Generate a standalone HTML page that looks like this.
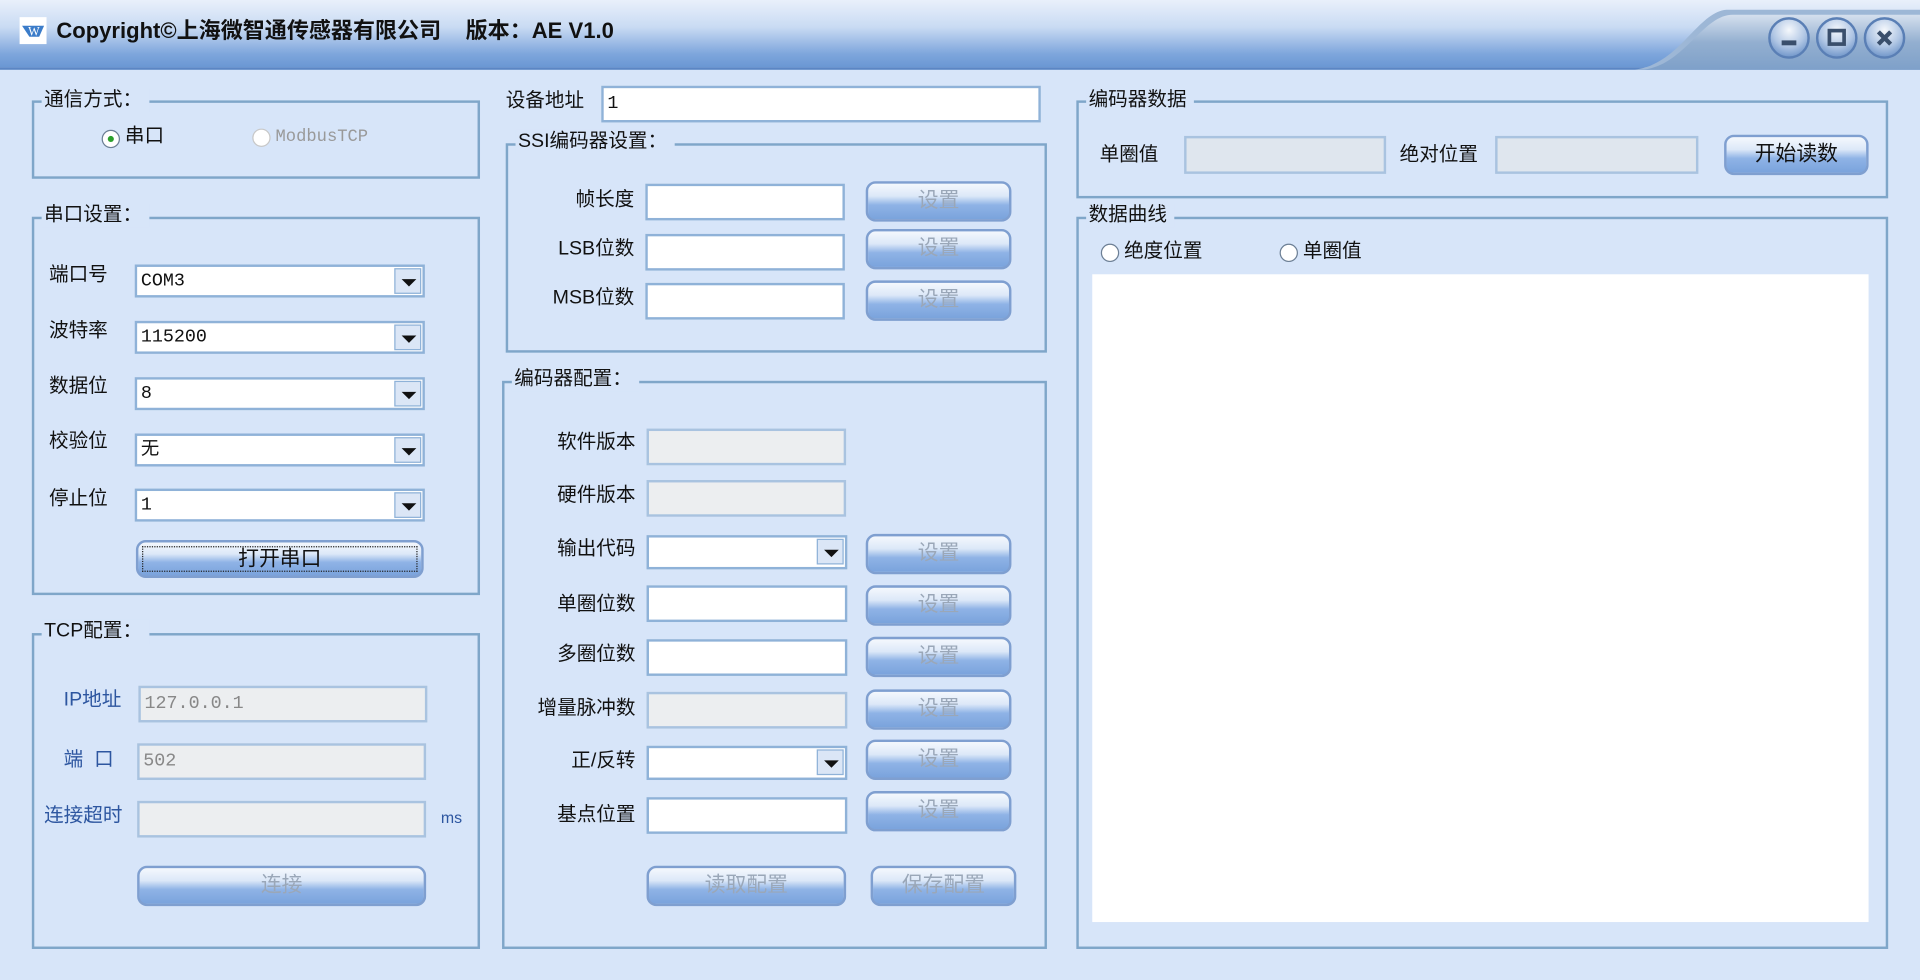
<!DOCTYPE html>
<html><head><meta charset="utf-8"><style>
*{box-sizing:border-box;margin:0;padding:0}
html,body{width:1920px;height:979px;overflow:hidden;background:#d7e5f9}
#w{position:absolute;left:0;top:0;width:1568px;height:800px;transform:scale(1.2245);transform-origin:0 0;background:#d7e5f9;font-family:"Liberation Sans","Noto Sans CJK SC",sans-serif;font-size:16px;color:#111}
.a{position:absolute}
.tb{left:0;top:0;width:1568px;height:57px;background:linear-gradient(#e9f0fb 0%,#c9dbf3 40%,#7ea6dc 80%,#6a97d3 100%);border-bottom:2px solid #5b86c4}
.gb{position:absolute;border:2px solid #7fa6c9}
.gt{position:absolute;background:#d7e5f9;padding:0 6px 0 2px;white-space:nowrap;line-height:20px}
.in{position:absolute;background:#fff;border:2px solid #8fb2d8;height:30px;font-size:15px;line-height:25px;padding-left:3px;font-family:"Liberation Mono","Noto Sans CJK SC",monospace}
.dis{background:#eceef0;color:#888;border-color:#a9c3e0}
.cb{position:absolute;background:#fff;border:2px solid #8fb2d8;height:27px;font-size:15px;line-height:23px;padding-left:3px;font-family:"Liberation Mono","Noto Sans CJK SC",monospace}
.cb i{position:absolute;right:1px;top:1px;width:22px;height:21px;border:1px solid #8fb2d8;background:#dbe6f6}
.cb i:after{content:"";position:absolute;left:5px;top:8px;border-left:6px solid transparent;border-right:6px solid transparent;border-top:6px solid #111}
.bt{position:absolute;height:33px;border:2px solid #7f9fd0;border-radius:8px;background:linear-gradient(#f4f8fd 0%,#dce8f8 35%,#8fb3e6 60%,#7aa3dc 100%);text-align:center;line-height:28px;font-size:17px;color:#9aa7b8}
.lb{position:absolute;white-space:nowrap;line-height:20px}
.r{position:absolute;width:15px;height:15px;border-radius:50%;border:1px solid #6c7f95;background:#fff}
</style></head><body><div id="w">
<div class="a tb"></div>
<svg class="a" style="left:1330px;top:0" width="238" height="57"><path d="M0 57 C40 57 55 10 80 8 L238 8 L238 57Z" fill="#9db7d6"/><path d="M10 57 C45 55 60 12 85 12 L238 12 L238 57Z" fill="url(#g1)"/><defs><linearGradient id="g1" x1="0" y1="0" x2="0" y2="1"><stop offset="0" stop-color="#d5e0ee"/><stop offset=".5" stop-color="#93afd0"/><stop offset="1" stop-color="#7ea0c9"/></linearGradient><radialGradient id="g2" cx=".5" cy=".3" r=".7"><stop offset="0" stop-color="#f5f8fc"/><stop offset=".6" stop-color="#b0c6e4"/><stop offset="1" stop-color="#6f95c9"/></radialGradient></defs>
<g stroke="#5a7fb5" stroke-width="2" fill="url(#g2)"><circle cx="131" cy="31" r="16"/><circle cx="170" cy="31" r="16"/><circle cx="209" cy="31" r="16"/></g>
<rect x="125" y="33" width="12" height="4" fill="#3a4f6c"/><rect x="164" y="25" width="12" height="11" fill="none" stroke="#3a4f6c" stroke-width="3"/><path d="M204 26 L214 36 M214 26 L204 36" stroke="#3a4f6c" stroke-width="3.5"/></svg>
<div class="a" style="left:16px;top:14px;width:22px;height:22px;background:#fff"><svg width="22" height="22"><path d="M2 7 H20 L16 16 H8Z" fill="#3b7cc9"/><text x="7" y="15" font-size="10" fill="#fff" font-family="Liberation Serif">W</text></svg></div>
<div class="lb" style="left:46px;top:15px;font-size:18px;font-weight:bold;color:#111">Copyright©上海微智通传感器有限公司&nbsp;&nbsp;&nbsp;&nbsp;版本：AE V1.0</div>

<!-- group 1 -->
<div class="gb" style="left:26px;top:82px;width:366px;height:64px"></div>
<div class="gt" style="left:34px;top:72px">通信方式：</div>
<div class="r" style="left:83px;top:106px"><div class="a" style="left:4px;top:4px;width:5px;height:5px;border-radius:50%;background:#2ca02c"></div></div>
<div class="lb" style="left:102px;top:102px">串口</div>
<div class="r" style="left:206px;top:105px;border-color:#c8c8c8"></div>
<div class="lb" style="left:225px;top:102px;color:#999;font-family:'Liberation Mono',monospace;font-size:14px">ModbusTCP</div>

<!-- group 2 -->
<div class="gb" style="left:26px;top:177px;width:366px;height:309px"></div>
<div class="gt" style="left:34px;top:166px">串口设置：</div>
<div class="lb" style="left:40px;top:215px">端口号</div><div class="cb" style="left:110px;top:216px;width:237px">COM3<i></i></div>
<div class="lb" style="left:40px;top:261px">波特率</div><div class="cb" style="left:110px;top:262px;width:237px">115200<i></i></div>
<div class="lb" style="left:40px;top:306px">数据位</div><div class="cb" style="left:110px;top:308px;width:237px">8<i></i></div>
<div class="lb" style="left:40px;top:351px">校验位</div><div class="cb" style="left:110px;top:354px;width:237px">无<i></i></div>
<div class="lb" style="left:40px;top:398px">停止位</div><div class="cb" style="left:110px;top:399px;width:237px">1<i></i></div>
<div class="bt" style="left:111px;top:441px;width:235px;height:31px;color:#111;line-height:25px"><div style="margin:3px;border:1px dotted #222;height:21px;line-height:19px">打开串口</div></div>

<!-- group 3 -->
<div class="gb" style="left:26px;top:517px;width:366px;height:258px"></div>
<div class="gt" style="left:34px;top:506px">TCP配置：</div>
<div class="lb" style="left:52px;top:562px;color:#2d56a0">IP地址</div><div class="in dis" style="left:113px;top:560px;width:236px">127.0.0.1</div>
<div class="lb" style="left:52px;top:611px;color:#2d56a0">端&nbsp;&nbsp;口</div><div class="in dis" style="left:112px;top:607px;width:236px">502</div>
<div class="lb" style="left:36px;top:657px;color:#2d56a0">连接超时</div><div class="in dis" style="left:112px;top:654px;width:236px"></div>
<div class="lb" style="left:360px;top:658px;font-size:13px;color:#2d56a0">ms</div>
<div class="bt" style="left:112px;top:707px;width:236px">连接</div>

<!-- device addr -->
<div class="lb" style="left:413px;top:73px">设备地址</div><div class="in" style="left:491px;top:70px;width:359px">1</div>

<!-- SSI -->
<div class="gb" style="left:413px;top:117px;width:442px;height:171px"></div>
<div class="gt" style="left:421px;top:106px">SSI编码器设置：</div>
<div class="lb" style="left:440px;top:154px;width:78px;text-align:right">帧长度</div><div class="in" style="left:527px;top:150px;width:163px"></div><div class="bt" style="left:707px;top:148px;width:119px">设置</div>
<div class="lb" style="left:440px;top:194px;width:78px;text-align:right">LSB位数</div><div class="in" style="left:527px;top:191px;width:163px"></div><div class="bt" style="left:707px;top:187px;width:119px">设置</div>
<div class="lb" style="left:440px;top:234px;width:78px;text-align:right">MSB位数</div><div class="in" style="left:527px;top:231px;width:163px"></div><div class="bt" style="left:707px;top:229px;width:119px">设置</div>

<!-- encoder config -->
<div class="gb" style="left:410px;top:311px;width:445px;height:464px"></div>
<div class="gt" style="left:418px;top:300px">编码器配置：</div>
<div class="lb" style="left:420px;top:352px;width:99px;text-align:right">软件版本</div><div class="in dis" style="left:528px;top:350px;width:163px"></div>
<div class="lb" style="left:420px;top:395px;width:99px;text-align:right">硬件版本</div><div class="in dis" style="left:528px;top:392px;width:163px"></div>
<div class="lb" style="left:420px;top:439px;width:99px;text-align:right">输出代码</div><div class="cb" style="left:528px;top:437px;width:164px;height:28px"><i></i></div><div class="bt" style="left:707px;top:436px;width:119px">设置</div>
<div class="lb" style="left:420px;top:484px;width:99px;text-align:right">单圈位数</div><div class="in" style="left:528px;top:478px;width:164px"></div><div class="bt" style="left:707px;top:478px;width:119px">设置</div>
<div class="lb" style="left:420px;top:525px;width:99px;text-align:right">多圈位数</div><div class="in" style="left:528px;top:522px;width:164px"></div><div class="bt" style="left:707px;top:520px;width:119px">设置</div>
<div class="lb" style="left:420px;top:569px;width:99px;text-align:right">增量脉冲数</div><div class="in dis" style="left:528px;top:565px;width:164px"></div><div class="bt" style="left:707px;top:563px;width:119px">设置</div>
<div class="lb" style="left:420px;top:612px;width:99px;text-align:right">正/反转</div><div class="cb" style="left:528px;top:609px;width:164px;height:28px"><i></i></div><div class="bt" style="left:707px;top:604px;width:119px">设置</div>
<div class="lb" style="left:420px;top:656px;width:99px;text-align:right">基点位置</div><div class="in" style="left:528px;top:651px;width:164px"></div><div class="bt" style="left:707px;top:646px;width:119px">设置</div>
<div class="bt" style="left:528px;top:707px;width:163px">读取配置</div>
<div class="bt" style="left:711px;top:707px;width:119px">保存配置</div>

<!-- encoder data -->
<div class="gb" style="left:879px;top:82px;width:663px;height:80px"></div>
<div class="gt" style="left:887px;top:72px">编码器数据</div>
<div class="lb" style="left:898px;top:117px">单圈值</div><div class="in dis" style="left:967px;top:111px;width:165px;height:31px;background:#dfe6ee"></div>
<div class="lb" style="left:1143px;top:117px">绝对位置</div><div class="in dis" style="left:1221px;top:111px;width:166px;height:31px;background:#dfe6ee"></div>
<div class="bt" style="left:1408px;top:110px;width:118px;color:#111">开始读数</div>

<!-- curve -->
<div class="gb" style="left:879px;top:177px;width:663px;height:598px"></div>
<div class="gt" style="left:887px;top:166px">数据曲线</div>
<div class="r" style="left:899px;top:199px"></div><div class="lb" style="left:918px;top:196px">绝度位置</div>
<div class="r" style="left:1045px;top:199px"></div><div class="lb" style="left:1064px;top:196px">单圈值</div>
<div class="a" style="left:892px;top:224px;width:634px;height:529px;background:#fff"></div>
</div></body></html>
